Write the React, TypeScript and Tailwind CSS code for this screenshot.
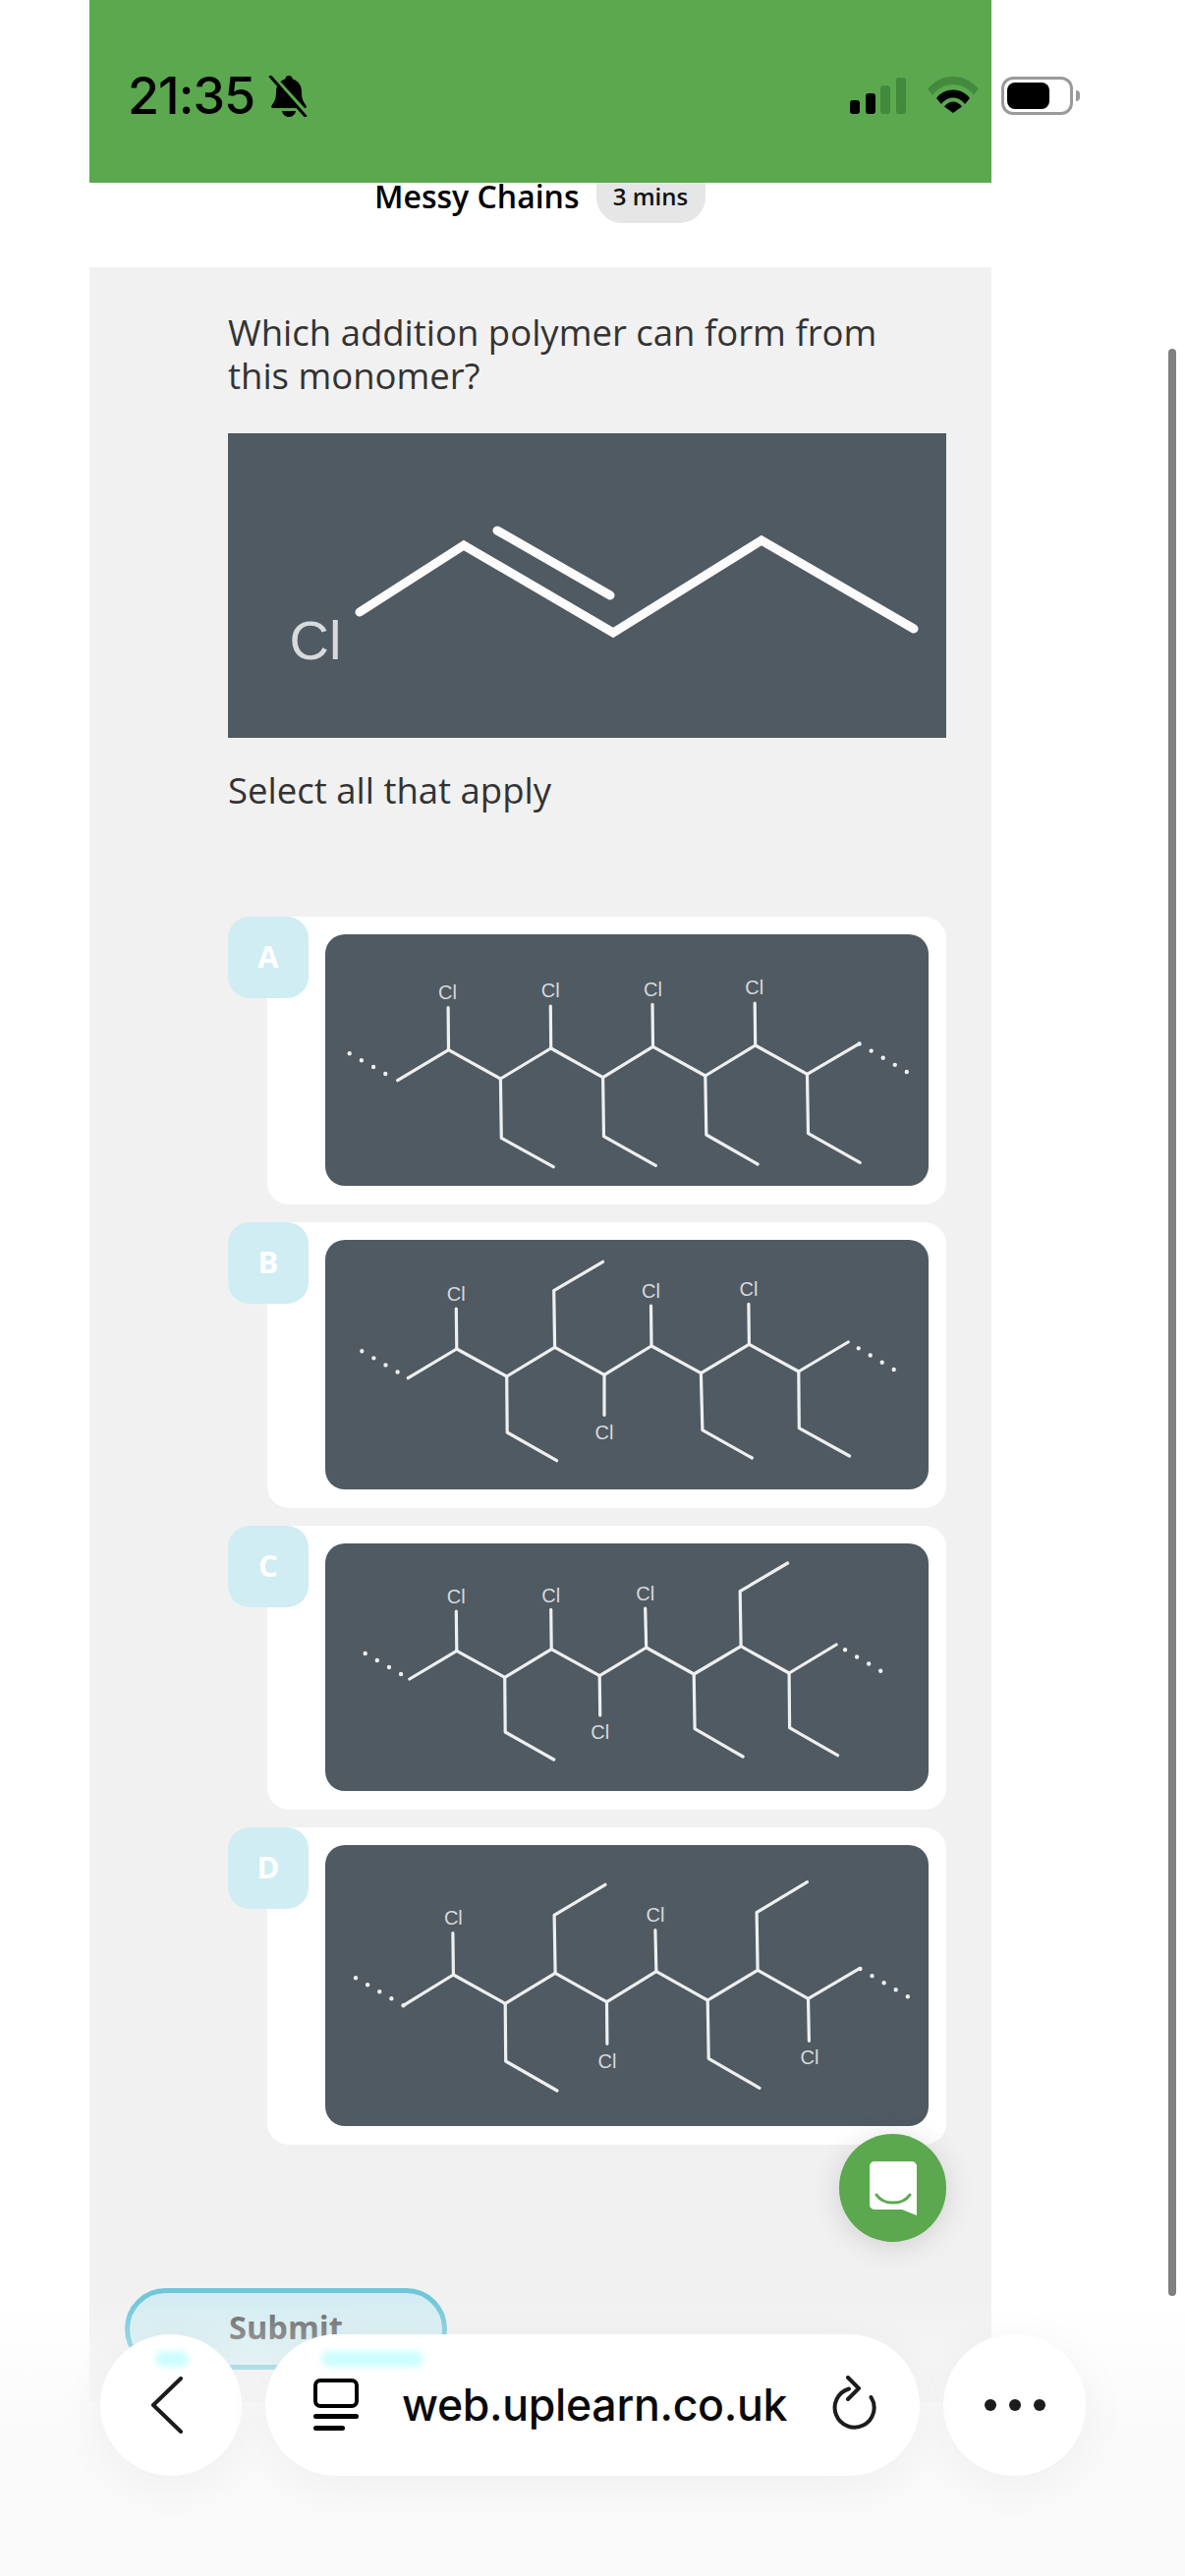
import React from "react";

type P = [number, number];
type Mol = {
  h: number;
  oy: number;
  chain: P[];
  dots: [P, P][];
  bonds: P[][];
  labels: P[];
};

const SX = 1568 / 760;
const X = (x: number) => (x - 229) / SX;

const pts = (a: P[], oy: number) => a.map(([x, y]) => `${X(x).toFixed(1)},${((y - oy) / 3).toFixed(1)}`).join(" ");

function Molecule({ m }: { m: Mol }) {
  return (
    <svg width="614" height={m.h} viewBox={`0 0 614 ${m.h}`} className="block">
      <g fill="none" stroke="#eef0f0" strokeWidth="3.2" strokeLinejoin="round" strokeLinecap="round">
        <polyline points={pts(m.chain, m.oy)} />
        {m.bonds.map((b, i) => (
          <polyline key={i} points={pts(b, m.oy)} />
        ))}
        {m.dots.map((d, i) => (
          <polyline key={i} points={pts(d, m.oy)} strokeWidth="4.4" strokeDasharray="0 14" />
        ))}
      </g>
      {m.labels.map(([x, y], i) => (
        <text
          key={i}
          x={X(x)}
          y={(y - m.oy) / 3 + 7}
          textAnchor="middle"
          fontSize="20"
          fill="#d6d9db"
          fontFamily="'Liberation Sans', sans-serif"
        >
          Cl
        </text>
      ))}
    </svg>
  );
}

const A: Mol = {
  h: 256,
  oy: 94,
  chain: [[381,540],[488,447],[597,535],[703,442],[812,531],[917,437],[1027,526],[1132,433],[1241,521],[1350,428]],
  dots: [[[280,458],[380,540]],[[1450,514],[1350,428]]],
  bonds: [
    [[487,318],[488,447]],[[702,313],[703,442]],[[916,308],[917,437]],[[1131,304],[1132,433]],
    [[597,535],[599,716],[708,804]],[[812,531],[814,711],[923,800]],[[1027,526],[1029,706],[1137,796]],[[1241,521],[1243,702],[1352,791]],
  ],
  labels: [[486,270],[702,266],[917,261],[1130,256]],
};
const B: Mol = {
  h: 254,
  oy: 97,
  chain: [[403,519],[505,430],[610,514],[711,425],[815,509],[914,421],[1018,504],[1119,416],[1223,499],[1327,409]],
  dots: [[[306,437],[403,519]],[[1423,493],[1327,409]]],
  bonds: [
    [[504,307],[505,430]],[[913,298],[914,421]],[[1118,293],[1119,416]],[[815,509],[815,632]],
    [[610,514],[611,685],[715,771]],[[1018,504],[1021,678],[1125,763]],[[1223,499],[1224,672],[1330,757]],[[711,425],[709,252],[812,164]],
  ],
  labels: [[504,262],[913,252],[1118,248],[815,684]],
};
const C: Mol = {
  h: 252,
  oy: 94,
  chain: [[406,508],[505,422],[606,503],[704,417],[805,498],[903,412],[1003,493],[1102,408],[1203,490],[1302,403]],
  dots: [[[313,430],[406,508]],[[1395,483],[1302,403]]],
  bonds: [
    [[504,301],[505,422]],[[703,296],[704,417]],[[901,292],[903,412]],[[805,498],[806,619]],
    [[606,503],[607,670],[709,754]],[[1003,493],[1005,660],[1106,745]],[[1203,490],[1204,657],[1305,741]],[[1102,408],[1100,240],[1200,154]],
  ],
  labels: [[504,257],[703,252],[901,248],[806,669]],
};
const D: Mol = {
  h: 286,
  oy: 82,
  chain: [[393,572],[498,478],[607,566],[712,473],[820,561],[924,468],[1032,556],[1137,464],[1243,551],[1351,459]],
  dots: [[[293,488],[393,572]],[[1452,545],[1351,459]]],
  bonds: [
    [[497,351],[498,478]],[[922,342],[924,468]],[[820,561],[821,689]],[[1243,551],[1245,680]],
    [[607,566],[608,742],[716,832]],[[1032,556],[1034,734],[1141,824]],[[712,473],[710,296],[817,203]],[[1137,464],[1135,288],[1241,195]],
  ],
  labels: [[498,305],[922,296],[821,741],[1246,731]],
};

function Option({ letter, m }: { letter: string; m: Mol }) {
  return (
    <div className="flex items-start">
      <div className="relative z-10 flex h-[83px] w-[82px] shrink-0 items-center justify-center rounded-[22px] bg-[#cfedf2] pb-[3px] text-[31px] font-bold text-white">
        {letter}
      </div>
      <div className="ml-[-42px] flex-1 rounded-[22px] bg-white pb-[19px] pl-[59px] pr-[18px] pt-[18px]">
        <div className="overflow-hidden rounded-[20px] bg-[#505a63]">
          <Molecule m={m} />
        </div>
      </div>
    </div>
  );
}

function Bell() {
  return (
    <svg width="42" height="42" viewBox="0 0 42 42" className="mt-[-2px]">
      <path d="M21 0c2.400 0 3.600 1.700 3.800 3.600C31 5.300 34 10.600 34 17c0 6 1.200 9 4.500 13.500.8 1.200.2 2.500-1.300 2.500H4.800c-1.500 0-2.100-1.300-1.300-2.500C6.800 26 8 23 8 17c0-6.400 3-11.700 9.200-13.400C17.400 1.700 18.600 0 21 0z" fill="#000" />
      <path d="M14 36h14c-.5 3.500-3.400 6-7 6s-6.500-2.500-7-6z" fill="#000" />
      <path d="M4.500 1 41 41" stroke="#5ba84f" strokeWidth="5" />
      <path d="M1.500 0 38.500 42" stroke="#000" strokeWidth="3" />
    </svg>
  );
}

function Wifi() {
  return (
    <svg width="52" height="37" viewBox="0 0 52 37">
      <path d="M0 12.500C7 4.500 16 0 26 0s19 4.500 26 12.500l-5 6C41 11.500 34 8 26 8S11 11.500 5 18.500z" fill="#448a3e" />
      <path d="M9 22C13 16.500 19 13.500 26 13.500S39 16.500 43 22l-5 6C35 24 31 21.500 26 21.500S17 24 14 28z" fill="#000" />
      <path d="M17 30.500C19 27.500 22.500 25.500 26 25.500s7 2 9 5L26 37z" fill="#000" />
    </svg>
  );
}

export default function App() {
  return (
    <div className="relative h-[2622px] w-[1206px] overflow-hidden bg-white font-['Open_Sans',sans-serif] text-[#333]">
      <div className="ml-[91px] w-[918px]">
        <div className="flex h-[186px] items-start bg-[#5ba84f] pl-[39px] pt-[70px]">
          <span className="w-[143px] font-['Inter',sans-serif] text-[52px] font-medium leading-[56px] tracking-[-1px] text-black">21:35</span>
          <div className="mt-[9px]"><Bell /></div>
          <div className="ml-[550px] mt-[9px] flex h-[37px] items-end gap-[5.500px]">
            <div className="h-[14px] w-[10px] rounded-[3px] bg-black" />
            <div className="h-[21px] w-[10px] rounded-[3px] bg-black" />
            <div className="h-[29px] w-[10px] rounded-[3px] bg-[#448a3e]" />
            <div className="h-[37px] w-[10px] rounded-[3px] bg-[#448a3e]" />
          </div>
          <div className="ml-[22px] mt-[8px]"><Wifi /></div>
        </div>

        <div className="flex h-[86px] items-start pl-[290px]">
          <span className="text-[32px] font-semibold leading-[28px] text-black">Messy Chains</span>
          <div className="ml-[17px] flex h-[41px] w-[111px] items-start justify-center rounded-b-[26px] bg-[#e6e6e6] text-[24px] font-semibold leading-[28px] text-[#111]">
            3 mins
          </div>
        </div>

        <div className="h-[2173px] bg-[#f1f1f1]">
          <div className="pl-[141px] pr-[46px] pt-[44px]">
            <p className="text-[36.500px] leading-[44px] text-[#333]">
              Which addition polymer can form from
              <br />
              this monomer?
            </p>
            <div className="mt-[37px] h-[310px] bg-[#505a63]">
              <svg width="731" height="310" viewBox="0 0 731 310" className="block">
                <g fill="none" stroke="#fbfbfb" strokeWidth="9" strokeLinecap="round" strokeLinejoin="miter">
                  <polyline points="134,182 240,114 392,203 543,109 698,199" />
                  <line x1="274" y1="99" x2="389" y2="165" />
                </g>
                <text x="89" y="230" textAnchor="middle" fontSize="56" fill="#d8dadc" fontFamily="'Liberation Sans', sans-serif">Cl</text>
              </svg>
            </div>
            <p className="mt-[31px] text-[36.500px] leading-[44px] text-[#333]">Select all that apply</p>

            <div className="mt-[107px] flex flex-col gap-[18px]">
              <Option letter="A" m={A} />
              <Option letter="B" m={B} />
              <Option letter="C" m={C} />
              <Option letter="D" m={D} />
            </div>
          </div>

          <button className="ml-[36px] mt-[146px] flex h-[83px] w-[328px] items-start justify-center rounded-[42px] border-[5px] border-[#6fc7d9] bg-[#d4edf2] pt-[13px] text-[32.500px] font-bold leading-[44px] text-[#666]">
            Submit
          </button>
        </div>
      </div>

      {/* battery sits over the white margin */}
      <div className="absolute left-[1019px] top-[78px] h-[39px] w-[73px] rounded-[12px] border-[3px] border-[#9a9a9a] bg-white p-[3px]">
        <div className="h-[27px] w-[43px] rounded-[8px] bg-black" />
      </div>
      <div className="absolute left-[1095px] top-[92px] h-[11px] w-[4px] rounded-r-full bg-[#9a9a9a]" />

      {/* page scrollbar */}
      <div className="absolute left-[1189px] top-[355px] h-[1982px] w-[8px] rounded-full bg-[#808080]" />

      {/* chat launcher */}
      <div className="absolute left-[854px] top-[2172px] z-20 flex h-[110px] w-[109px] items-start justify-center rounded-full bg-[#5ba84f] pt-[28px] shadow-[0_4px_30px_rgba(0,0,0,0.14)]">
        <svg width="48" height="55" viewBox="0 0 48 55">
          <path d="M5 0h38a5 5 0 0 1 5 5v50L33 49H5a5 5 0 0 1-5-5V5a5 5 0 0 1 5-5z" fill="#fff" />
          <path d="M7 34c4 6 10 8 17 8s13-2 17-8" fill="none" stroke="#5ba84f" strokeWidth="3" strokeLinecap="round" />
        </svg>
      </div>

      {/* browser toolbar fade */}
      <div className="absolute inset-x-0 top-[2340px] z-30 h-[282px] bg-linear-to-b from-[#fafafa00] via-[#fafafa80] via-25% to-[#fafafa] to-45%" />

      <div className="absolute left-[102px] top-[2376px] z-40 flex h-[144px] w-[1003px] gap-[24px]">
        <div className="relative flex h-[144px] w-[144px] shrink-0 items-center justify-center rounded-full bg-white shadow-[0_10px_50px_rgba(0,0,0,0.05)]">
          <div className="absolute left-[56px] top-[17px] h-[16px] w-[34px] rounded-full bg-[#ccfdff] blur-[3px]" />
          <svg width="34" height="58" viewBox="0 0 34 58" className="mr-[8px] mt-[-1px]">
            <path d="M31 2 3 29l28 27" fill="none" stroke="#1c1c1c" strokeWidth="4" strokeLinecap="round" strokeLinejoin="round" />
          </svg>
        </div>

        <div className="relative flex h-[144px] w-[666px] shrink-0 items-center rounded-full bg-white pl-[49px] shadow-[0_10px_50px_rgba(0,0,0,0.05)]">
          <div className="absolute left-[57px] top-[17px] h-[16px] w-[104px] rounded-full bg-[#ccfdff] blur-[3px]" />
          <svg width="46" height="54" viewBox="0 0 46 54" className="shrink-0">
            <rect x="2" y="2" width="42" height="26" rx="5" fill="none" stroke="#000" strokeWidth="4" />
            <rect x="0" y="36" width="46" height="5" rx="2.500" fill="#000" />
            <rect x="0" y="48" width="32" height="5" rx="2.500" fill="#000" />
          </svg>
          <span className="ml-[44px] font-['Inter',sans-serif] text-[44.600px] font-medium leading-[56px] tracking-[-0.3px] text-[#0a0a0a]">web.uplearn.co.uk</span>
          <svg width="46" height="56" viewBox="0 0 46 56" className="absolute left-[577px] top-[42px]">
            <path d="M17 13.500A20 20 0 1 0 39.500 22" fill="none" stroke="#1c1c1c" strokeWidth="4" strokeLinecap="round" />
            <path d="M16 2 27 13 16 24" fill="none" stroke="#1c1c1c" strokeWidth="4" strokeLinecap="round" strokeLinejoin="round" />
          </svg>
        </div>

        <div className="flex h-[144px] w-[145px] shrink-0 items-center justify-center gap-[13px] rounded-full bg-white shadow-[0_10px_50px_rgba(0,0,0,0.05)]">
          <div className="h-[12px] w-[12px] rounded-full bg-[#1c1c1c]" />
          <div className="h-[12px] w-[12px] rounded-full bg-[#1c1c1c]" />
          <div className="h-[12px] w-[12px] rounded-full bg-[#1c1c1c]" />
        </div>
      </div>
    </div>
  );
}
